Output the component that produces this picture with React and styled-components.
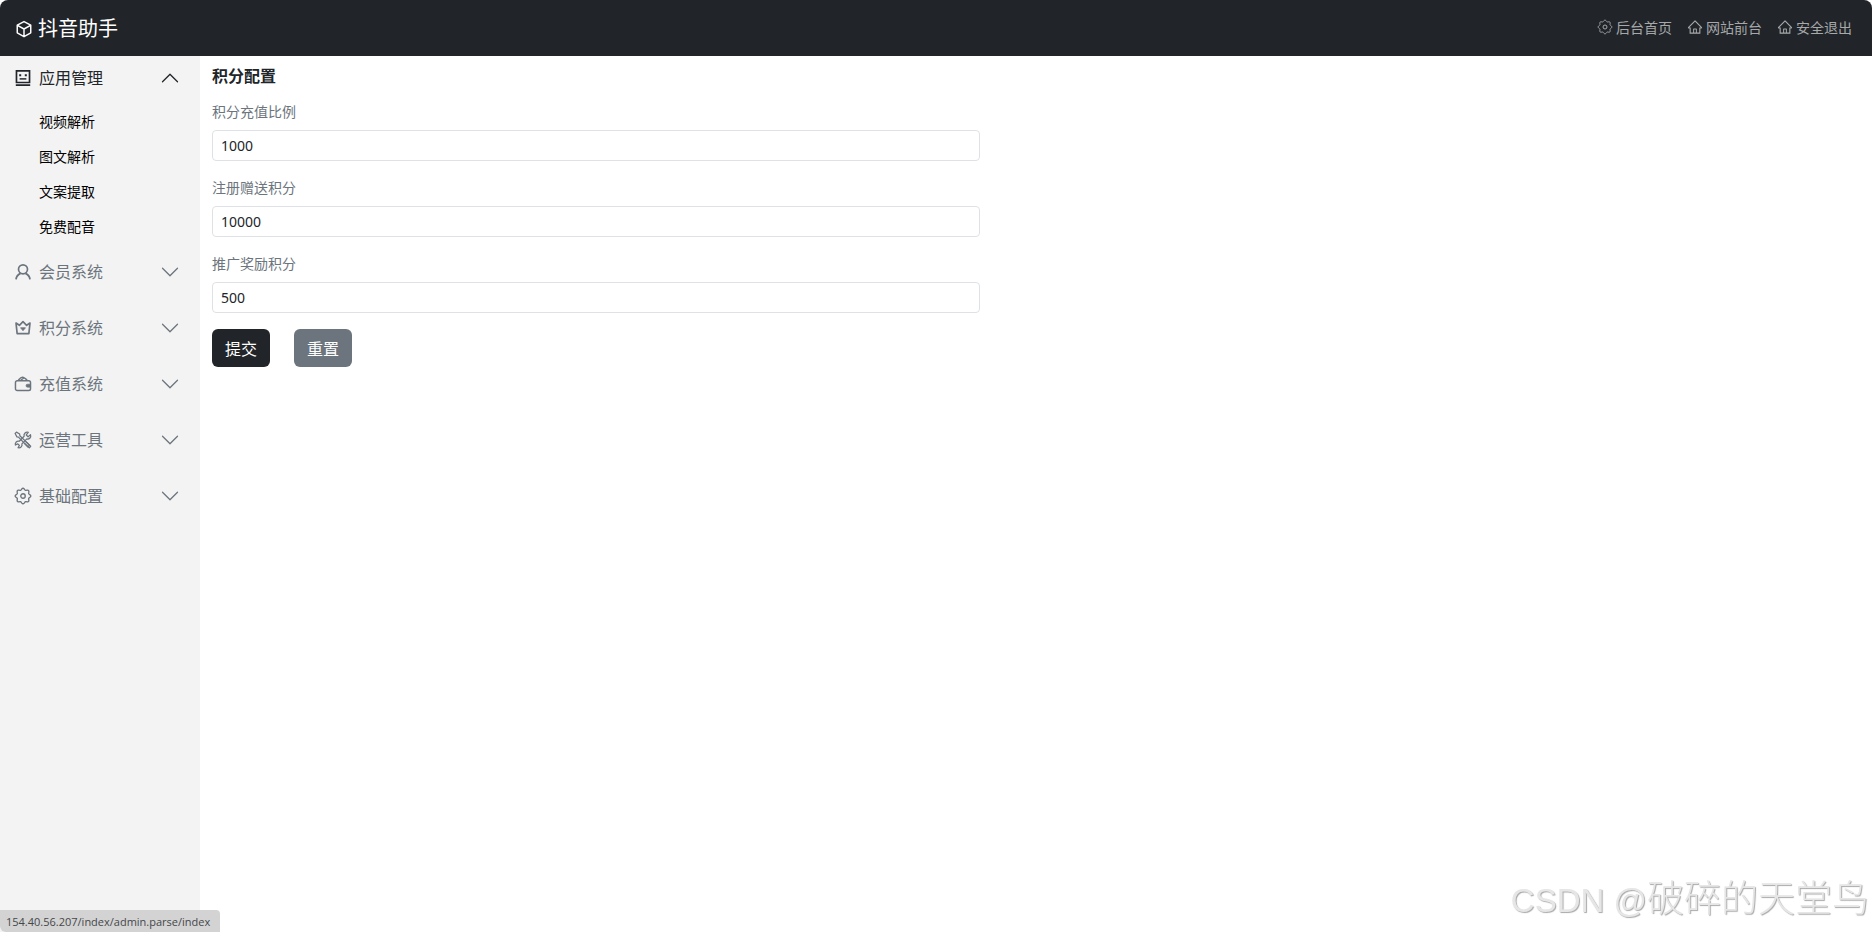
import React, { useState } from "react";
import styled, { createGlobalStyle } from "styled-components";
import { AiOutlineHome } from "react-icons/ai";
import { BsChevronDown } from "react-icons/bs";

const GlobalStyle = createGlobalStyle`
  *, *::before, *::after { box-sizing: border-box; }
  body {
    margin: 0;
    background: #fff;
    color: #212529;
    font-family: "Noto Sans", "Noto Sans CJK SC", sans-serif;
    font-size: 14px;
    line-height: 21px;
  }
  button, input { font-family: inherit; margin: 0; }
`;

const Page = styled.div`
  display: flex;
  flex-direction: column;
  min-height: 100vh;
`;

const TopBar = styled.header`
  display: flex;
  align-items: center;
  justify-content: space-between;
  height: 56px;
  padding: 0 20px 0 15px;
  background: #212529;
  border-radius: 8px 8px 0 0;
`;

const Brand = styled.a`
  display: flex;
  align-items: center;
  gap: 5px;
  padding-top: 2px;
  color: #fff;
  font-size: 20px;
  line-height: 30px;
  text-decoration: none;
`;

const TopLinks = styled.nav`
  display: flex;
  gap: 15px;
  padding-bottom: 2px;
`;

const TopLink = styled.a`
  display: flex;
  align-items: center;
  gap: 3px;
  color: #a6a8a9;
  text-decoration: none;
`;

const Body = styled.div`
  display: flex;
  flex: 1;
`;

const Sidebar = styled.nav`
  flex: 0 0 200px;
  background: #f3f3f3;
`;

const MenuGroup = styled.div`
  padding-bottom: ${(p) => (p.$open ? 0 : 12)}px;
`;

const MenuButton = styled.button`
  display: flex;
  align-items: center;
  gap: 7px;
  width: 100%;
  height: 44px;
  padding: 0 20px 0 14px;
  border: 0;
  background: none;
  color: ${(p) => (p.$open ? "#212529" : "#6c757d")};
  font-size: 16px;
  text-align: left;
  cursor: pointer;
`;

const MenuLabel = styled.span`
  flex: 1;
  padding-bottom: 2px;
`;

const Chevron = styled(BsChevronDown)`
  transform: ${(p) => (p.$open ? "rotate(180deg)" : "none")};
`;

const SubMenu = styled.div`
  display: flex;
  flex-direction: column;
  gap: 15px;
  padding: 12px 0 13px;
`;

const SubLink = styled.a`
  padding: 0 16px 0 39px;
  color: #000;
  line-height: 20px;
  text-decoration: none;
`;

const Main = styled.main`
  flex: 1;
  min-width: 0;
  padding: 8px 12px;
`;

const Title = styled.h1`
  margin: 0 0 13px;
  font-size: 16px;
  line-height: 24px;
  font-weight: 700;
  color: #212529;
`;

const Form = styled.form`
  max-width: 768px;
`;

const Field = styled.div`
  display: flex;
  flex-direction: column;
  gap: 8px;
  margin-bottom: 16px;
`;

const Label = styled.label`
  color: #6c757d;
`;

const Input = styled.input`
  width: 100%;
  height: 31px;
  padding: 4px 8px;
  border: 1px solid #dee2e6;
  border-radius: 4px;
  background: #fff;
  color: #212529;
  font-size: 14px;
`;

const Actions = styled.div`
  display: flex;
  gap: 24px;
`;

const Button = styled.button`
  height: 38px;
  padding: 0 13px;
  border: 0;
  border-radius: 6px;
  background: ${(p) => (p.$secondary ? "#6c757d" : "#212529")};
  color: #fff;
  font-size: 16px;
  cursor: pointer;
`;

const StatusBubble = styled.div`
  position: fixed;
  left: 0;
  bottom: 0;
  height: 22px;
  padding: 0 10px 0 6px;
  border-radius: 0 4px 0 6px;
  background: #d3d3d3;
  color: #45474a;
  font-family: "Open Sans", "Noto Sans", sans-serif;
  font-size: 11px;
  line-height: 23px;
`;

const Watermark = styled.div`
  position: fixed;
  right: 3px;
  bottom: 4px;
  color: #e6e6e6;
  font-family: "Noto Sans CJK SC", sans-serif;
  font-size: 37px;
  line-height: 54px;
  font-weight: 300;
  text-shadow: 1px 1px 1px #a8a8a8;
  pointer-events: none;
`;

const WatermarkLatin = styled.span`
  font-family: "Liberation Sans", sans-serif;
  font-size: 33px;
`;

function LineIcon({ size = 18, children }) {
  return (
    <svg width={size} height={size} viewBox="0 0 16 16" fill="none" stroke="currentColor" strokeWidth="1.3" strokeLinejoin="round" aria-hidden="true">
      {children}
    </svg>
  );
}

const CubeIcon = () => (
  <LineIcon>
    <path d="M8 1.4 14 4.6V11.4L8 14.8 2 11.4V4.6ZM2.2 4.8 8 8 13.8 4.8M8 8V14.6" />
  </LineIcon>
);

const RobotIcon = () => (
  <LineIcon>
    <path d="M2.2 1.7H13.8V12H2.2ZM1.6 14.4H14.4" strokeLinejoin="miter" strokeWidth="1.5" />
    <path d="M5 8.8H11" />
    <path d="M4.6 4.6H6.4V6.4H4.6ZM9.6 4.6H11.4V6.4H9.6Z" fill="currentColor" stroke="none" />
  </LineIcon>
);

const UserIcon = () => (
  <LineIcon>
    <circle cx="8" cy="5.6" r="4" strokeWidth="1.5" />
    <path d="M1.8 14.6C2 12 3.6 10.2 5.8 9.2M14.2 14.6C14 12 12.4 10.2 10.2 9.2" strokeWidth="1.6" />
  </LineIcon>
);

const CrownIcon = () => (
  <LineIcon>
    <path d="M1.8 3.6 4.8 5.6 8 2.4 11.2 5.6 14.2 3.6 13.2 13H2.8Z" strokeWidth="1.5" />
    <path d="M5.8 7.8 8 10.4 10.2 7.8Z" fill="currentColor" strokeWidth="0.7" />
  </LineIcon>
);

const WalletIcon = () => (
  <LineIcon>
    <rect x="1.3" y="5.2" width="13.4" height="8.6" rx="1.6" />
    <path d="M3.6 5C5 3.4 5.6 2 7.4 2S10.4 3.2 12 5M6 4.6 9 2.4" strokeWidth="1.2" />
    <path d="M14.6 8.2H12A1.3 1.3 0 0 0 12 10.8H14.6Z" fill="currentColor" strokeWidth="0.6" />
  </LineIcon>
);

const ToolsIcon = () => (
  <LineIcon>
    <path d="M1 2.2 2.2 1 5 2.6 5.2 4.2 13.8 12.6 12.4 14.2 4 5.4 2.6 5.2Z" strokeWidth="1.1" />
    <path d="M14.7 3.3 12.5 5.1 10.9 3.5 12.7 1.2C10.6.5 8.3 2.2 9 4.7L4.7 9.1C2.6 8.5.7 10.2 1.2 12.5L3.4 11.4 4.8 12.8 3.6 14.9C6 15.4 7.6 13.5 7 11.4L11.4 7C13.7 7.6 15.4 5.5 14.7 3.3Z" strokeWidth="1.1" />
    <path d="M10.6 9.6 14.8 13.6 13.6 14.9 9.2 10.8" strokeWidth="1.2" />
  </LineIcon>
);

// Outline with eight rounded lobes around the hub.
const GEAR_OUTLINE = Array.from({ length: 96 }, (_, i) => {
  const angle = (i * Math.PI) / 48;
  const radius = 6.2 + 0.7 * Math.cos(8 * angle);
  return `${(8 + radius * Math.cos(angle)).toFixed(2)} ${(8 + radius * Math.sin(angle)).toFixed(2)}`;
}).join("L");

const GearIcon = ({ size = 18, weight = 1.2 }) => (
  <LineIcon size={size}>
    <path d={`M${GEAR_OUTLINE}Z`} strokeWidth={weight} />
    <circle cx="8" cy="8" r="2" strokeWidth={weight} />
  </LineIcon>
);

const MENU = [
  { title: "应用管理", Icon: RobotIcon, items: ["视频解析", "图文解析", "文案提取", "免费配音"] },
  { title: "会员系统", Icon: UserIcon, items: [] },
  { title: "积分系统", Icon: CrownIcon, items: [] },
  { title: "充值系统", Icon: WalletIcon, items: [] },
  { title: "运营工具", Icon: ToolsIcon, items: [] },
  { title: "基础配置", Icon: GearIcon, items: [] },
];

const TOP_LINKS = [
  { text: "后台首页", icon: <GearIcon size={16} weight={1} /> },
  { text: "网站前台", icon: <AiOutlineHome size={16} aria-hidden="true" /> },
  { text: "安全退出", icon: <AiOutlineHome size={16} aria-hidden="true" /> },
];

const FIELDS = [
  { id: "rate", label: "积分充值比例", value: "1000" },
  { id: "signup", label: "注册赠送积分", value: "10000" },
  { id: "referral", label: "推广奖励积分", value: "500" },
];

export default function App() {
  const [openIndex, setOpenIndex] = useState(0);

  return (
    <>
      <GlobalStyle />
      <Page>
        <TopBar>
          <Brand href="#">
            <CubeIcon />
            抖音助手
          </Brand>
          <TopLinks>
            {TOP_LINKS.map(({ text, icon }) => (
              <TopLink href="#" key={text}>
                {icon}
                {text}
              </TopLink>
            ))}
          </TopLinks>
        </TopBar>
        <Body>
          <Sidebar>
            {MENU.map(({ title, Icon, items }, i) => {
              const open = openIndex === i;
              return (
                <MenuGroup key={title} $open={open}>
                  <MenuButton
                    type="button"
                    $open={open}
                    aria-expanded={open}
                    onClick={() => setOpenIndex(open ? -1 : i)}
                  >
                    <Icon />
                    <MenuLabel>{title}</MenuLabel>
                    <Chevron size={20} $open={open} aria-hidden="true" />
                  </MenuButton>
                  {open && (
                    <SubMenu>
                      {items.map((item) => (
                        <SubLink href="#" key={item}>{item}</SubLink>
                      ))}
                    </SubMenu>
                  )}
                </MenuGroup>
              );
            })}
          </Sidebar>
          <Main>
            <Title>积分配置</Title>
            <Form onSubmit={(e) => e.preventDefault()}>
              {FIELDS.map(({ id, label, value }) => (
                <Field key={id}>
                  <Label htmlFor={id}>{label}</Label>
                  <Input id={id} type="text" defaultValue={value} />
                </Field>
              ))}
              <Actions>
                <Button type="submit">提交</Button>
                <Button type="reset" $secondary>重置</Button>
              </Actions>
            </Form>
          </Main>
        </Body>
      </Page>
      <StatusBubble>154.40.56.207/index/admin.parse/index</StatusBubble>
      <Watermark>
        <WatermarkLatin>CSDN @</WatermarkLatin>破碎的天堂鸟
      </Watermark>
    </>
  );
}
